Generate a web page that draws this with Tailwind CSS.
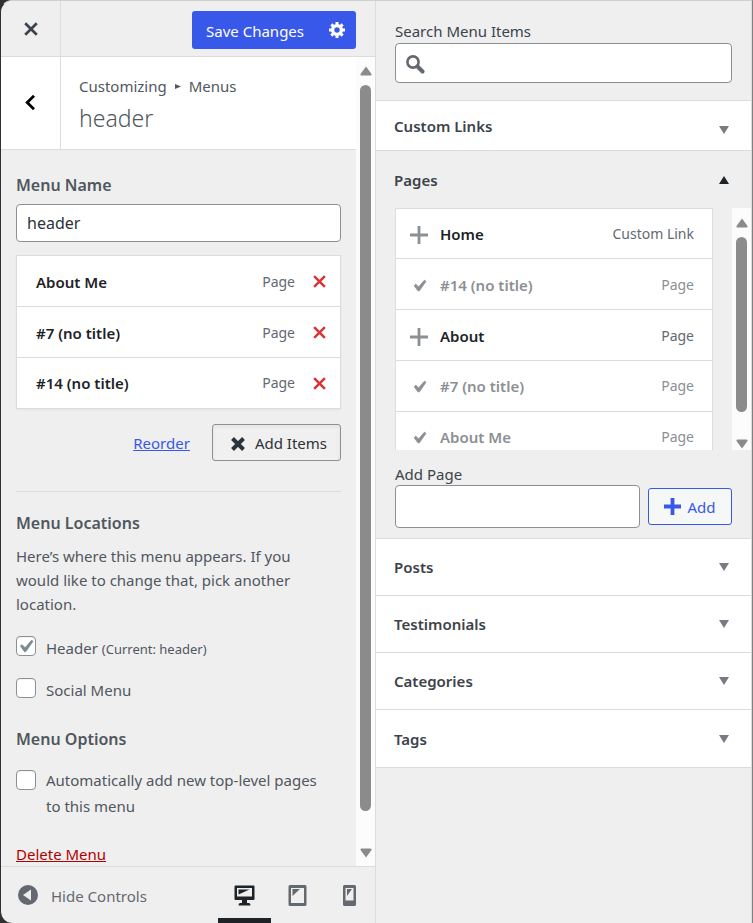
<!DOCTYPE html>
<html lang="en">
<head>
<meta charset="utf-8">
<meta name="viewport" content="width=device-width, initial-scale=1">
<title>Customize: header menu</title>
<script src="https://cdn.jsdelivr.net/npm/@tailwindcss/browser@4"></script>
</head>
<body class="h-screen overflow-hidden bg-[#303030] font-['Noto_Sans','Open_Sans',sans-serif] text-[15px] leading-6 text-[#50575e]">
<svg class="hidden" aria-hidden="true">
  <symbol id="up" viewBox="0 0 12 10"><path d="M6 .5 11.500 8Q12 9.500 10.500 9.500H1.500Q0 9.500 .5 8Z" fill="#8b8b8b"/></symbol>
  <symbol id="down" viewBox="0 0 12 10"><path d="M6 9.500 11.500 2Q12 .5 10.500 .5H1.500Q0 .5 .5 2Z" fill="#8b8b8b"/></symbol>
  <symbol id="tri" viewBox="0 0 10 8"><path d="M0 0H10L5 8Z" fill="currentColor"/></symbol>
  <symbol id="x" viewBox="0 0 14 14"><path d="M1.200 1.200 12.800 12.800M12.800 1.200 1.200 12.800" stroke="currentColor" stroke-width="2.700" fill="none"/></symbol>
  <symbol id="plus" viewBox="0 0 18 18"><path d="M9 0V18M0 9H18" stroke="currentColor" stroke-width="2.800" fill="none"/></symbol>
</svg>
<div class="grid h-full grid-cols-[minmax(0,1fr)_376px] overflow-hidden rounded-l-xl border-x border-t border-l-[#303030] border-r-[#808080] border-t-[#d0d0d0] bg-[#efefef]">
  <section class="flex min-h-0 min-w-0 flex-col border-r border-[#dcdcde]">
    <header class="flex h-14 shrink-0 items-center justify-between border-b border-[#dcdcde]">
      <button type="button" aria-label="Close" class="flex h-full w-15 items-center justify-center border-r border-[#dcdcde] text-[#3c434a]"><svg class="h-[14px] w-[14px]"><use href="#x"/></svg></button>
      <div class="mr-[19px] mt-[3px] flex h-[38px] overflow-hidden rounded-[3px] bg-[#3858e9] text-white">
        <button type="button" class="px-3.5 pt-[2px]">Save Changes</button>
        <button type="button" aria-label="Publish settings" class="flex w-[38px] items-center justify-center"><svg class="h-4 w-4" viewBox="0 0 16 16"><g fill="none" stroke="currentColor"><circle cx="8" cy="8" r="4.400" stroke-width="3.400"/><path d="M8 0v3M8 13v3M0 8h3M13 8h3M2.340 2.340l2.120 2.120M11.540 11.540l2.120 2.120M13.660 2.340l-2.120 2.120M4.460 11.540l-2.120 2.120" stroke-width="3"/></g></svg></button>
      </div>
    </header>
    <div class="flex min-h-0 flex-1">
      <div class="min-w-0 flex-1 overflow-hidden">
        <div class="flex h-[93px] border-b border-[#dcdcde] bg-white">
          <button type="button" aria-label="Back" class="flex w-15 items-center justify-center border-r border-[#dcdcde] text-black"><svg class="h-4 w-3" viewBox="0 0 12 16" fill="none" stroke="currentColor" stroke-width="2.800"><path d="M9 .8 2.200 7.500 9 14.200"/></svg></button>
          <div class="pl-[18px] pt-[17px]">
            <p class="flex items-center">Customizing<svg class="mx-2 h-[5px] w-[6px]" viewBox="0 0 6 5"><path d="M0 0 6 2.500 0 5Z" fill="currentColor"/></svg>Menus</p>
            <h1 class="text-[23px] leading-10 font-light">header</h1>
          </div>
        </div>
        <div class="px-[15px] pt-[23px]">
          <label for="name" class="block text-base font-semibold">Menu Name</label>
          <input id="name" type="text" value="header" class="mt-[7px] block h-[38px] w-full rounded border border-[#8c8f94] bg-white px-2.5 text-base text-[#2c3338]">
          <ul class="mt-[13px] border border-[#dcdcde] bg-white shadow-xs">
            <li class="flex h-[51px] items-center border-b border-[#dcdcde] pl-[19px] pr-3.5 pt-px"><span class="flex-1 font-semibold text-[#1d2327]">About Me</span><span class="text-sm text-[#646970]">Page</span><button type="button" aria-label="Remove About Me" class="ml-[18px] text-[#d63638]"><svg class="h-[13px] w-[13px]"><use href="#x"/></svg></button></li>
            <li class="flex h-[51px] items-center border-b border-[#dcdcde] pl-[19px] pr-3.5 pt-px"><span class="flex-1 font-semibold text-[#1d2327]">#7 (no title)</span><span class="text-sm text-[#646970]">Page</span><button type="button" aria-label="Remove #7" class="ml-[18px] text-[#d63638]"><svg class="h-[13px] w-[13px]"><use href="#x"/></svg></button></li>
            <li class="flex h-[50px] items-center pl-[19px] pr-3.5"><span class="flex-1 font-semibold text-[#1d2327]">#14 (no title)</span><span class="text-sm text-[#646970]">Page</span><button type="button" aria-label="Remove #14" class="ml-[18px] text-[#d63638]"><svg class="h-[13px] w-[13px]"><use href="#x"/></svg></button></li>
          </ul>
          <div class="mt-[15px] flex items-center justify-end border-b border-[#dcdcde] pb-[30px]">
            <button type="button" class="mr-[22px] text-[#3858e9] underline">Reorder</button>
            <button type="button" class="flex h-[37px] items-center gap-2.5 rounded-[3px] border border-[#8c8f94] bg-[#f0f0f0] pl-[18px] pr-[13px] text-[#2c3338] inset-shadow-sm"><svg class="mt-[2px] h-3.5 w-3.5" viewBox="0 0 14 14"><path d="M1.500 1.500 12.500 12.500M12.500 1.500 1.500 12.500" stroke="currentColor" stroke-width="4"/></svg>Add Items</button>
          </div>
          <h2 class="mt-[19px] text-base font-semibold">Menu Locations</h2>
          <p class="mt-[9px] pr-5">Here’s where this menu appears. If you would like to change that, pick another location.</p>
          <div class="mt-5 flex gap-[10px]">
            <span class="relative h-5 w-5"><input id="loc1" type="checkbox" checked class="block h-5 w-5 appearance-none rounded border border-[#8c8f94] bg-white inset-shadow-xs"><svg class="pointer-events-none absolute -left-[3px] -top-[2px] h-[25px] w-[25px] text-[#7e8993]" viewBox="0 0 20 20"><path d="m14.830 4.890 1.340.94-5.810 8.380H9.020L5.780 9.670l1.340-1.250 2.570 2.400z" fill="currentColor" stroke="currentColor" stroke-width=".3"/></svg></span>
            <label for="loc1">Header <small class="text-[13px]">(Current: header)</small></label>
          </div>
          <div class="mt-[17px] flex gap-[10px]">
            <input id="loc2" type="checkbox" class="block h-5 w-5 appearance-none rounded border border-[#8c8f94] bg-white inset-shadow-xs">
            <label for="loc2">Social Menu</label>
          </div>
          <h2 class="mt-[25px] text-base font-semibold">Menu Options</h2>
          <div class="mt-4 flex gap-[10px] pr-2">
            <input id="auto" type="checkbox" class="mt-[3px] block h-5 w-5 shrink-0 appearance-none rounded border border-[#8c8f94] bg-white inset-shadow-xs">
            <label for="auto" class="leading-[26px]">Automatically add new top-level pages to this menu</label>
          </div>
          <button type="button" class="mt-[23px] text-[#b10000] underline">Delete Menu</button>
        </div>
      </div>
      <div class="flex w-[19px] shrink-0 flex-col items-center bg-[#fcfcfc] pb-2 pt-[9px]" aria-hidden="true">
        <svg class="h-2.5 w-3 shrink-0"><use href="#up"/></svg>
        <div class="mb-[37px] mt-[9px] w-[11px] flex-1 rounded-full bg-[#8b8b8b]"></div>
        <svg class="h-2.5 w-3 shrink-0"><use href="#down"/></svg>
      </div>
    </div>
    <footer class="flex h-[57px] shrink-0 border-t border-[#dcdcde] pl-[17px] text-[#646970]">
      <button type="button" class="flex items-center gap-[13px]"><svg class="h-5 w-5" viewBox="0 0 20 20"><circle cx="10" cy="10" r="10" fill="currentColor"/><path d="M13 4.500V15.500L5 10Z" fill="#efefef"/></svg><span class="pt-[2px]">Hide Controls</span></button>
      <div class="ml-auto flex">
        <button type="button" aria-label="Desktop preview" class="flex w-[53px] items-center justify-center border-b-5 border-[#1d2327] pt-[6px] text-[#1d2327]"><svg class="h-[21px] w-[21px]" viewBox="0 0 21 21"><path fill="currentColor" fill-rule="evenodd" d="M1.500.5h18q1 0 1 1v12.500q0 1-1 1H13v3h2q1.500 0 1.500 2.500H4.500Q4.500 18 6 18h2v-3H1.500q-1 0-1-1V1.500q0-1 1-1ZM3 3v8.500h15V3Z"/><path d="M4.500 4.500h11l-11 5Z" fill="currentColor"/></svg></button>
        <button type="button" aria-label="Tablet preview" class="flex w-[52px] items-center justify-center"><svg class="h-[21px] w-[19px]" viewBox="0 0 19 21"><path fill="currentColor" fill-rule="evenodd" d="M2 0h15q1.500 0 1.500 1.500v18q0 1.500-1.500 1.500H2Q.5 21 .5 19.500v-18Q.5 0 2 0Zm1 3v15h13V3Z"/><path d="M4.500 4h7.500l-7.500 7Z" fill="currentColor"/></svg></button>
        <button type="button" aria-label="Mobile preview" class="flex w-[52px] items-center justify-center"><svg class="h-[21px] w-[13px]" viewBox="0 0 13 21"><path fill="currentColor" fill-rule="evenodd" d="M1.500 0h10Q13 0 13 1.500v18q0 1.500-1.500 1.500h-10Q0 21 0 19.500v-18Q0 0 1.500 0ZM2.500 3v12.500h8V3Z"/><path d="M4 4h5l-5 7Z" fill="currentColor"/></svg></button>
      </div>
    </footer>
  </section>
  <section class="min-w-0 border-r border-[#dcdcde]">
    <div class="border-b border-[#dcdcde] px-[19px] pb-[17px] pt-[18px]">
      <label for="search" class="block text-[#3c434a]">Search Menu Items</label>
      <div class="flex h-10 items-center rounded border border-[#8c8f94] bg-white pl-2.5 text-[#646970]">
        <svg class="mt-[2px] h-[19px] w-[19px] shrink-0" viewBox="0 0 19 19" fill="none" stroke="currentColor"><circle cx="7" cy="7" r="5.600" stroke-width="2.600"/><path d="m11.500 11.500 5 5" stroke-width="4" stroke-linecap="round"/></svg>
        <input id="search" type="search" class="h-full min-w-0 flex-1 bg-transparent px-2 outline-none">
      </div>
    </div>
    <button type="button" class="flex h-[50px] w-full items-center border-b border-[#dcdcde] bg-white pl-[18px] pr-[22px] pt-px text-left font-semibold text-[#3c434a]"><span class="flex-1">Custom Links</span><svg class="mt-[7px] h-2 w-2.5 text-[#787c82]"><use href="#tri"/></svg></button>
    <div class="border-b border-[#dcdcde] pb-2.5">
      <button type="button" aria-expanded="true" class="flex h-[57px] w-full items-center pl-[18px] pr-[22px] text-left font-semibold text-[#3c434a]"><span class="flex-1">Pages</span><svg class="h-2 w-2.5 rotate-180 text-[#1d2327]"><use href="#tri"/></svg></button>
      <div class="flex h-[242px] pl-[19px]">
        <ul class="mr-[19px] min-w-0 flex-1 overflow-hidden border-x border-t border-[#dcdcde] bg-white text-[#8c8f94]">
          <li class="flex h-[50px] items-center border-b border-[#dcdcde] pl-3.5 pr-[18px] pt-px"><button type="button" class="flex flex-1 items-center gap-3 font-semibold"><svg class="mt-[2px] h-[18px] w-[18px]"><use href="#plus"/></svg><span class="text-[#1d2327]">Home</span></button><span class="text-sm text-[#646970]">Custom Link</span></li>
          <li class="flex h-[51px] items-center border-b border-[#dcdcde] pl-3.5 pr-[18px] pt-px"><button type="button" class="flex flex-1 items-center gap-3 font-semibold"><svg class="mt-[2px] h-[18px] w-[18px]" viewBox="2 2 16 16"><path d="m14.830 4.890 1.340.94-5.810 8.380H9.020L5.780 9.670l1.340-1.250 2.570 2.400z" fill="currentColor" stroke="currentColor" stroke-width=".8"/></svg>#14 (no title)</button><span class="text-sm">Page</span></li>
          <li class="flex h-[51px] items-center border-b border-[#dcdcde] pl-3.5 pr-[18px] pt-px"><button type="button" class="flex flex-1 items-center gap-3 font-semibold"><svg class="mt-[2px] h-[18px] w-[18px]"><use href="#plus"/></svg><span class="text-[#1d2327]">About</span></button><span class="text-sm text-[#646970]">Page</span></li>
          <li class="flex h-[51px] items-center border-b border-[#dcdcde] pl-3.5 pr-[18px]"><button type="button" class="flex flex-1 items-center gap-3 font-semibold"><svg class="mt-[2px] h-[18px] w-[18px]" viewBox="2 2 16 16"><path d="m14.830 4.890 1.340.94-5.810 8.380H9.020L5.780 9.670l1.340-1.250 2.570 2.400z" fill="currentColor" stroke="currentColor" stroke-width=".8"/></svg>#7 (no title)</button><span class="text-sm">Page</span></li>
          <li class="flex h-[51px] items-center border-b border-[#dcdcde] pl-3.5 pr-[18px]"><button type="button" class="flex flex-1 items-center gap-3 font-semibold"><svg class="mt-[2px] h-[18px] w-[18px]" viewBox="2 2 16 16"><path d="m14.830 4.890 1.340.94-5.810 8.380H9.020L5.780 9.670l1.340-1.250 2.570 2.400z" fill="currentColor" stroke="currentColor" stroke-width=".8"/></svg>About Me</button><span class="text-sm">Page</span></li>
        </ul>
        <div class="flex w-[19px] shrink-0 flex-col items-center bg-[#fcfcfc] pb-px pt-2.5" aria-hidden="true">
          <svg class="h-2.5 w-3 shrink-0"><use href="#up"/></svg>
          <div class="mb-[27px] mt-[9px] w-[11px] flex-1 rounded-full bg-[#8b8b8b]"></div>
          <svg class="h-2.5 w-3 shrink-0"><use href="#down"/></svg>
        </div>
      </div>
      <div class="px-[19px] pt-[13px]">
        <label for="add" class="block leading-[22px] text-[#3c434a]">Add Page</label>
        <div class="flex items-center gap-2">
          <input id="add" type="text" class="h-[43px] min-w-0 flex-1 rounded border border-[#8c8f94] bg-white px-2.5">
          <button type="button" class="flex h-[37px] w-[84px] items-center justify-center gap-[6px] rounded-[3px] border border-[#3858e9] bg-[#f6f7f7] text-[#3858e9]"><svg class="h-[17px] w-[17px]" viewBox="0 0 18 18"><path d="M9 0V18M0 9H18" stroke="currentColor" stroke-width="4"/></svg>Add</button>
        </div>
      </div>
    </div>
    <button type="button" class="flex h-[57px] w-full items-center border-b border-[#dcdcde] bg-white pl-[18px] pr-[22px] text-left font-semibold text-[#3c434a]"><span class="flex-1">Posts</span><svg class="h-2 w-2.5 text-[#787c82]"><use href="#tri"/></svg></button>
    <button type="button" class="flex h-[57px] w-full items-center border-b border-[#dcdcde] bg-white pl-[18px] pr-[22px] text-left font-semibold text-[#3c434a]"><span class="flex-1">Testimonials</span><svg class="h-2 w-2.5 text-[#787c82]"><use href="#tri"/></svg></button>
    <button type="button" class="flex h-[57px] w-full items-center border-b border-[#dcdcde] bg-white pl-[18px] pr-[22px] text-left font-semibold text-[#3c434a]"><span class="flex-1">Categories</span><svg class="h-2 w-2.5 text-[#787c82]"><use href="#tri"/></svg></button>
    <button type="button" class="flex h-[58px] w-full items-center border-b border-[#dcdcde] bg-white pl-[18px] pr-[22px] text-left font-semibold text-[#3c434a]"><span class="flex-1">Tags</span><svg class="h-2 w-2.5 text-[#787c82]"><use href="#tri"/></svg></button>
  </section>
</div>
</body>
</html>
